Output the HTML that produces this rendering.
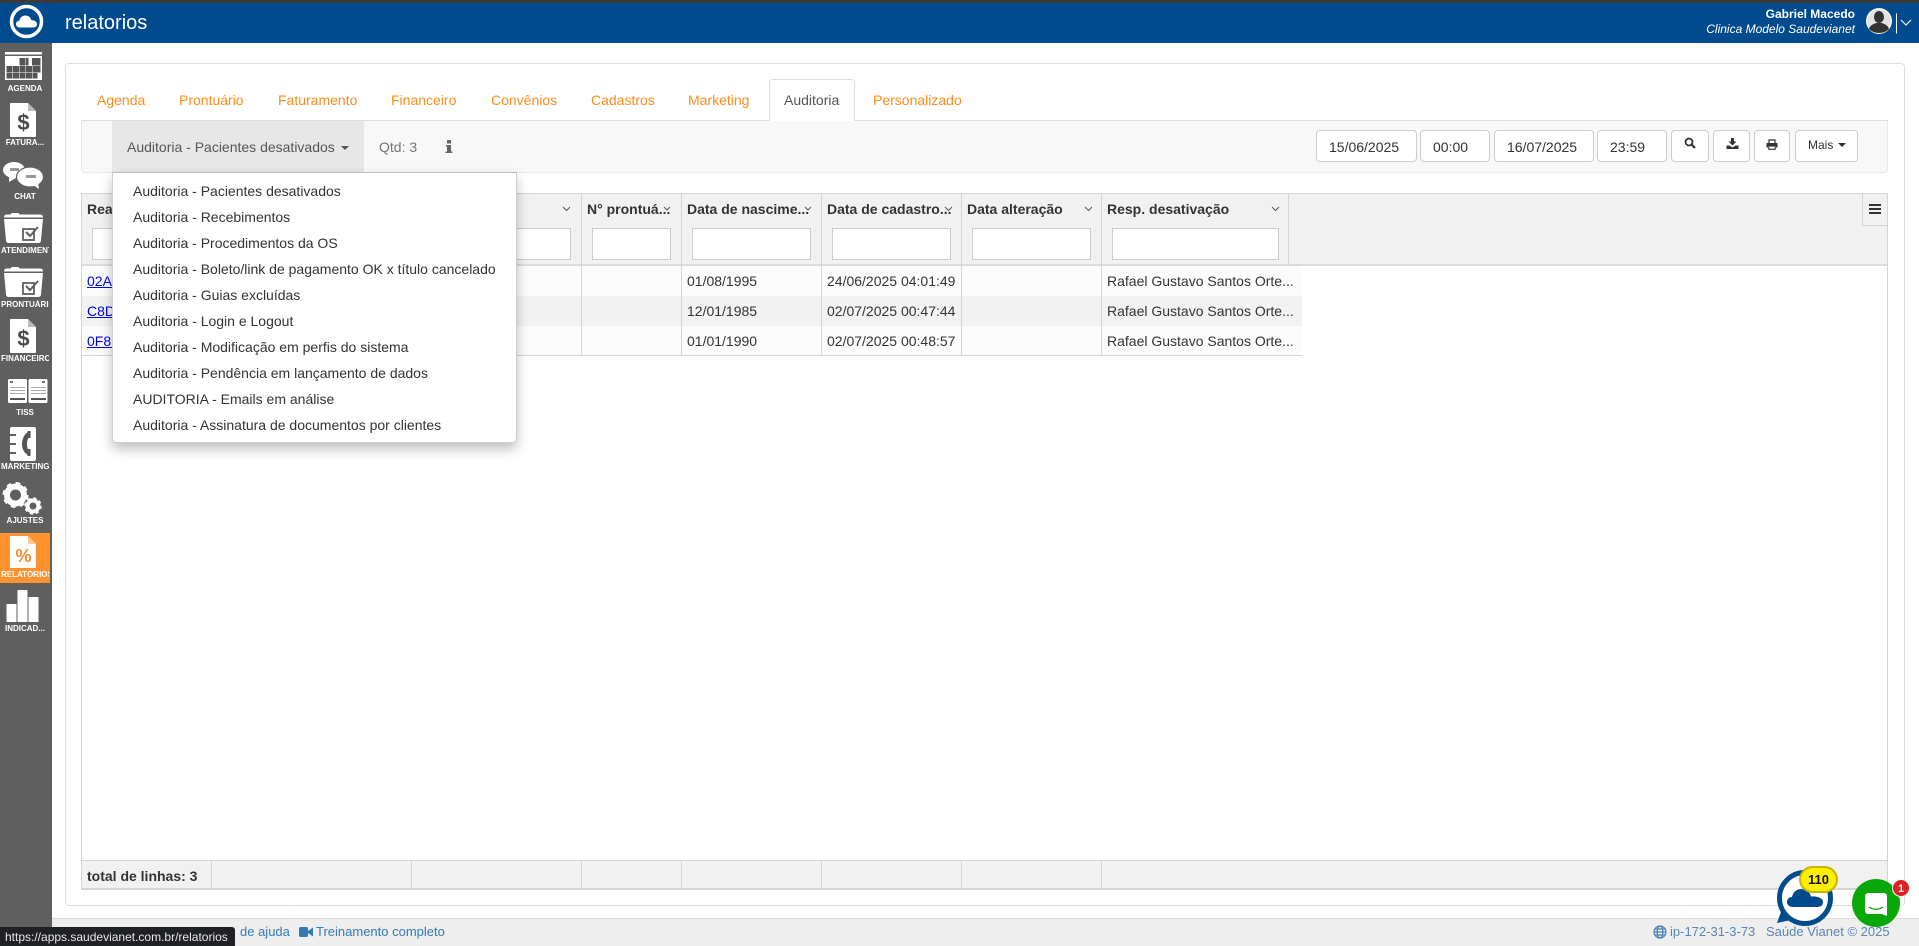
<!DOCTYPE html>
<html lang="pt-BR">
<head>
<meta charset="utf-8">
<title>relatorios</title>
<style>
html,body{margin:0;padding:0;width:1919px;height:946px;overflow:hidden;background:#fff;font-family:"Liberation Sans",sans-serif;font-size:14px;color:#333}
*{box-sizing:border-box}
.a{position:absolute}
.t{position:absolute;white-space:nowrap;line-height:20px}
.lab{position:absolute;left:1px;width:48px;overflow:hidden;text-align:center;font-size:8px;font-weight:bold;color:#fff;line-height:10px;white-space:nowrap}
.tab{position:absolute;top:89px;line-height:22px;color:#ff8c1a;white-space:nowrap}
.inp{position:absolute;top:130px;height:32px;background:#fff;border:1px solid #ccc;border-radius:4px;color:#333;line-height:30px;padding:1px 0 0 12px}
.btn{position:absolute;top:130px;height:32px;background:#fff;border:1px solid #ccc;border-radius:4px}
.mi{position:absolute;left:133px;line-height:20px;white-space:nowrap;color:#333}
.th{position:absolute;top:199px;line-height:20px;font-weight:bold;color:#333;white-space:nowrap}
.fi{position:absolute;top:228px;height:32px;background:#fff;border:1px solid #ccc}
.vl{position:absolute;width:1px;background:#d4d4d4}
.td{position:absolute;line-height:20px;color:#333;white-space:nowrap}
.lnk{position:absolute;left:87px;line-height:20px;color:#00e;text-decoration:underline}
</style>
</head>
<body>
<!-- top -->
<div class="a" style="left:0;top:0;width:1919px;height:3px;background:#3a3a3a"></div>
<div class="a" style="left:0;top:3px;width:1919px;height:40px;background:#004b8d"></div>
<svg class="a" style="left:8px;top:3px" width="38" height="38" viewBox="8 3 38 38">
<circle cx="26.500" cy="21.500" r="15" fill="none" stroke="#fff" stroke-width="3.500"/>
<path d="M20 27.500c-2.500 0-4-1.600-4-3.500 0-2 1.600-3.300 3.400-3.300.6-3.300 3.100-5.200 6-5.200 3 0 5.400 1.900 6 4.800 2.600-.3 5.600 1.100 5.600 3.800 0 2.100-1.700 3.400-4 3.400z" fill="#fff"/>
</svg>
<div class="t" style="left:65px;top:11px;font-size:20px;line-height:24px;color:#fff">relatorios</div>
<div class="t" style="right:64px;top:6px;font-size:12px;line-height:16px;color:#fff;font-weight:bold">Gabriel Macedo</div>
<div class="t" style="right:64px;top:21px;font-size:12px;line-height:16px;color:#fff;font-style:italic">Clinica Modelo Saudevianet</div>
<svg class="a" style="left:1864px;top:6px" width="52" height="32" viewBox="0 0 52 32">
<circle cx="15" cy="15" r="13" fill="#f4f4f4"/>
<circle cx="15" cy="15" r="11.500" fill="#e2e2e2"/>
<ellipse cx="15" cy="11" rx="5" ry="6" fill="#333"/>
<path d="M5 23c1-4 5-5 7-6h6c2 1 6 2 7 6-2.500 2.500-6 4-10 4S7.500 25.500 5 23z" fill="#333"/>
<path d="M32.500 7.500v20" stroke="#fff" stroke-width="1"/>
<path d="M37 14l5 5 5-5" fill="none" stroke="#fff" stroke-width="1.100"/>
</svg>

<!-- sidebar -->
<div class="a" style="left:0;top:43px;width:52px;height:903px;background:#5f5f5f"></div>
<div class="a" style="left:0;top:533px;width:50px;height:50px;background:#ff922e"></div>
<svg class="a" style="left:0;top:43px" width="52" height="600" viewBox="0 43 52 600">
<!-- agenda -->
<rect x="5" y="52" width="37" height="2.500" fill="#fff"/>
<rect x="5" y="56" width="37" height="24" fill="#fff"/>
<g fill="#555">
<rect x="6.500" y="66" width="6" height="6.500"/><rect x="13" y="66" width="6" height="6.500"/>
<rect x="19.500" y="58" width="6" height="7.500"/><rect x="19.500" y="66" width="6" height="6.500"/>
<rect x="32" y="58" width="8.500" height="7.500"/><rect x="26" y="58" width="2.500" height="7.500"/>
<rect x="26" y="66" width="6" height="6.500"/><rect x="32.500" y="66" width="8" height="6.500"/>
<rect x="6.500" y="73" width="6" height="5.500"/><rect x="13" y="73" width="6" height="5.500"/>
<rect x="19.500" y="73" width="6" height="5.500"/><rect x="26" y="73" width="6" height="5.500"/><rect x="32.500" y="73" width="5" height="5.500"/>
</g>
<!-- fatura -->
<g id="d1"><path d="M11 103h17l8 8v25a1 1 0 0 1-1 1H11a1 1 0 0 1-1-1v-32a1 1 0 0 1 1-1z" fill="#fff"/><path d="M28 103l8 8h-8z" fill="#bbb"/></g>
<text x="23.500" y="130" font-family="Liberation Sans" font-size="22" font-weight="bold" fill="#4a4a4a" text-anchor="middle">$</text>
<!-- chat -->
<ellipse cx="14" cy="170" rx="11" ry="8" fill="#fff"/>
<path d="M9 175l0 7 7-4z" fill="#fff"/>
<rect x="10" y="168" width="9" height="3" fill="#999"/>
<ellipse cx="30" cy="177" rx="13.500" ry="10" fill="#fff" stroke="#5f5f5f" stroke-width="1.200"/>
<path d="M33 185l6 4-1-7z" fill="#fff"/>
<rect x="26" y="175" width="10" height="3" fill="#999"/>
<!-- folders -->
<g id="f1">
<path d="M4 217.500c0-2 1-3 3-3h3l2-1.500h6l2 1.500h20c2 0 3 1 3 3z" fill="#fff"/>
<path d="M4 219h39l-2 21c0 2-1 3-3 3H9c-2 0-3-1-3-3z" fill="#fff"/>
<rect x="23" y="229" width="11" height="11" fill="none" stroke="#5f5f5f" stroke-width="1.800"/>
<path d="M26 232l4 4 8-9" fill="none" stroke="#5f5f5f" stroke-width="2"/>
</g>
<use href="#f1" y="54"/>
<use href="#d1" y="216"/>
<text x="23.500" y="346" font-family="Liberation Sans" font-size="22" font-weight="bold" fill="#4a4a4a" text-anchor="middle">$</text>
<!-- tiss -->
<rect x="8" y="379" width="19" height="24" rx="1.500" fill="#fff"/>
<rect x="28.500" y="379" width="19" height="24" rx="1.500" fill="#fff"/>
<g fill="#aaa"><rect x="10" y="387" width="15" height="1"/><rect x="10" y="390" width="15" height="1"/><rect x="10" y="393" width="15" height="1"/><rect x="31" y="387" width="15" height="1"/><rect x="31" y="390" width="15" height="1"/><rect x="31" y="393" width="15" height="1"/></g>
<rect x="10" y="398" width="15" height="2" fill="#555"/><rect x="31" y="398" width="15" height="2" fill="#555"/>
<rect x="10" y="381" width="3" height="2" fill="#777"/><rect x="42" y="381" width="3" height="2" fill="#777"/>
<!-- marketing -->
<path d="M12 427h22a2 2 0 0 1 2 2v30a2 2 0 0 1-2 2H12a2 2 0 0 1-2-2v-30a2 2 0 0 1 2-2z" fill="#fff"/>
<rect x="10" y="434" width="6" height="2" fill="#5f5f5f"/><rect x="10" y="443" width="6" height="2" fill="#5f5f5f"/><rect x="10" y="452" width="6" height="2" fill="#5f5f5f"/>
<path d="M30 431c-5 2-8 7-8 13s3 10 8 12l0-5c-2-1-3-3-3-7s1-6 3-8z" fill="#555"/>
<rect x="27.500" y="431" width="3" height="7" fill="#555"/><rect x="27.500" y="449" width="3" height="7" fill="#555"/>
<!-- gears -->
<circle cx="15.500" cy="495" r="8.500" fill="none" stroke="#fff" stroke-width="6"/>
<circle cx="15.500" cy="495" r="11.500" fill="none" stroke="#fff" stroke-width="3" stroke-dasharray="4.500 4.500"/>
<circle cx="33" cy="506" r="5.500" fill="none" stroke="#fff" stroke-width="4"/>
<circle cx="33" cy="506" r="7.500" fill="none" stroke="#fff" stroke-width="2.500" stroke-dasharray="3 2.900"/>
<!-- relatorios -->
<path d="M11 536h17l8 8v23a1 1 0 0 1-1 1H11a1 1 0 0 1-1-1v-30a1 1 0 0 1 1-1z" fill="#fff"/>
<path d="M28 536l8 8h-8z" fill="#ffc58f"/>
<text x="23.500" y="562" font-family="Liberation Sans" font-size="18" font-weight="bold" fill="#f0892a" text-anchor="middle">%</text>
<!-- indicadores -->
<rect x="6.500" y="604" width="10" height="18" fill="#fff"/>
<rect x="17.500" y="590" width="10" height="32" fill="#fff"/>
<rect x="28.500" y="597" width="10" height="25" fill="#fff"/>
</svg>
<div class="lab" style="top:84px">AGENDA</div>
<div class="lab" style="top:138px">FATURA...</div>
<div class="lab" style="top:192px">CHAT</div>
<div class="lab" style="top:246px">ATENDIMENTOS</div>
<div class="lab" style="top:300px">PRONTUÁRIOS</div>
<div class="lab" style="top:354px">FINANCEIRO</div>
<div class="lab" style="top:408px">TISS</div>
<div class="lab" style="top:462px">MARKETING</div>
<div class="lab" style="top:516px">AJUSTES</div>
<div class="lab" style="top:570px;text-align:left">RELATÓRIOS</div>
<div class="lab" style="top:624px">INDICAD...</div>

<!-- panel -->
<div class="a" style="left:65px;top:63px;width:1840px;height:843px;background:#fff;border:1px solid #ddd;border-radius:4px"></div>

<!-- tabs -->
<div class="a" style="left:81px;top:120px;width:1807px;height:1px;background:#ddd"></div>
<div class="a" style="left:769px;top:79px;width:86px;height:42px;background:#fff;border:1px solid #ddd;border-bottom:0;border-radius:4px 4px 0 0"></div>
<div class="tab" style="left:97px">Agenda</div>
<div class="tab" style="left:179px">Prontuário</div>
<div class="tab" style="left:278px">Faturamento</div>
<div class="tab" style="left:391px">Financeiro</div>
<div class="tab" style="left:491px">Convênios</div>
<div class="tab" style="left:591px">Cadastros</div>
<div class="tab" style="left:688px">Marketing</div>
<div class="tab" style="left:784px;color:#555">Auditoria</div>
<div class="tab" style="left:873px">Personalizado</div>

<!-- toolbar -->
<div class="a" style="left:81px;top:121px;width:1807px;height:52px;background:#f8f8f8;border:1px solid #e7e7e7;border-top:0;border-radius:0 0 4px 4px"></div>
<div class="a" style="left:112px;top:121px;width:252px;height:52px;background:#e7e7e7"></div>
<div class="t" style="left:127px;top:137px;color:#555">Auditoria - Pacientes desativados</div>
<div class="a" style="left:341px;top:146px;width:0;height:0;border:4px solid transparent;border-top-color:#555;border-bottom:0"></div>
<div class="t" style="left:379px;top:137px;color:#777">Qtd: 3</div>
<svg class="a" style="left:444px;top:139px" width="10" height="16" viewBox="0 0 10 16"><rect x="3" y="1" width="4" height="3.500" fill="#666"/><path d="M2 6h5v6.500h1.500V14H1.500v-1.500H3V7.500H2z" fill="#666"/></svg>

<div class="inp" style="left:1316px;width:101px">15/06/2025</div>
<div class="inp" style="left:1420px;width:70px">00:00</div>
<div class="inp" style="left:1494px;width:100px">16/07/2025</div>
<div class="inp" style="left:1597px;width:70px">23:59</div>
<div class="btn" style="left:1671px;width:38px"></div>
<svg class="a" style="left:1684px;top:137px" width="12" height="12" viewBox="0 0 12 12"><circle cx="5" cy="5" r="3.500" fill="none" stroke="#333" stroke-width="1.800"/><path d="M7.500 7.500l3.500 3.500" stroke="#333" stroke-width="2.200"/></svg>
<div class="btn" style="left:1713px;width:37px"></div>
<svg class="a" style="left:1726px;top:138px" width="13" height="12" viewBox="0 0 13 12"><path d="M5 0h3v3.500h2.500L6.500 7.500 2.500 3.500H5z" fill="#333"/><path d="M.5 7.500h3l3 2 3-2h3V11H.5z" fill="#333"/></svg>
<div class="btn" style="left:1754px;width:36px"></div>
<svg class="a" style="left:1766px;top:139px" width="12" height="11" viewBox="0 0 12 11"><path d="M3 4V1h6v3" fill="none" stroke="#333" stroke-width="1.200"/><path d="M.5 4h11v4.500H10V7H2v1.500H.5z" fill="#333"/><rect x="2.800" y="7" width="6.400" height="3.300" fill="none" stroke="#333" stroke-width="1.100"/></svg>
<div class="btn" style="left:1795px;width:63px"></div>
<div class="t" style="left:1808px;top:135px;font-size:12px;color:#333">Mais</div>
<div class="a" style="left:1838px;top:143px;width:0;height:0;border:4px solid transparent;border-top-color:#333;border-bottom:0"></div>

<!-- grid -->
<div class="a" style="left:81px;top:193px;width:1807px;height:697px;background:#fff;border:1px solid #d4d4d4;border-bottom:2px solid #d4d4d4"></div>
<div class="a" style="left:82px;top:194px;width:1805px;height:71px;background:#f1f1f1"></div>
<div class="a" style="left:82px;top:264px;width:1805px;height:2px;background:#dcdcdc"></div>
<div class="a" style="left:1862px;top:193px;width:26px;height:33px;background:#f1f1f1;border:1px solid #d4d4d4"></div>
<div class="a" style="left:1869px;top:204px;width:12px;height:2px;background:#333"></div>
<div class="a" style="left:1869px;top:208px;width:12px;height:2px;background:#333"></div>
<div class="a" style="left:1869px;top:212px;width:12px;height:2px;background:#333"></div>

<!-- rows -->
<div class="a" style="left:82px;top:266px;width:1220px;height:30px;background:#fcfcfc"></div>
<div class="a" style="left:82px;top:296px;width:1220px;height:30px;background:#f2f2f2"></div>
<div class="a" style="left:82px;top:326px;width:1220px;height:30px;background:#fcfcfc"></div>
<div class="a" style="left:82px;top:355px;width:1220px;height:1px;background:#d4d4d4"></div>
<div class="vl" style="left:581px;top:194px;height:162px"></div>
<div class="vl" style="left:681px;top:194px;height:162px"></div>
<div class="vl" style="left:821px;top:194px;height:162px"></div>
<div class="vl" style="left:961px;top:194px;height:162px"></div>
<div class="vl" style="left:1101px;top:194px;height:162px"></div>
<div class="vl" style="left:1288px;top:194px;height:71px"></div>

<div class="th" style="left:87px">Rea</div>
<div class="th" style="left:587px">N° prontuá...</div>
<div class="th" style="left:687px">Data de nascime...</div>
<div class="th" style="left:827px">Data de cadastro...</div>
<div class="th" style="left:967px">Data alteração</div>
<div class="th" style="left:1107px">Resp. desativação</div>
<svg class="a" style="left:82px;top:204px" width="1210" height="10" viewBox="82 204 1210 10" fill="none" stroke="#556" stroke-width="1">
<path d="M563 207l3.500 3.500 3.500-3.500"/><path d="M664 207l3 3 3-3"/><path d="M805 207l3 3 3-3"/><path d="M945 207l3.500 3.500 3.500-3.500"/><path d="M1085 207l3.500 3.500 3.500-3.500"/><path d="M1272 207l3.500 3.500 3.500-3.500"/>
</svg>

<div class="fi" style="left:92px;width:100px"></div>
<div class="fi" style="left:480px;width:91px"></div>
<div class="fi" style="left:592px;width:79px"></div>
<div class="fi" style="left:692px;width:119px"></div>
<div class="fi" style="left:832px;width:119px"></div>
<div class="fi" style="left:972px;width:119px"></div>
<div class="fi" style="left:1112px;width:167px"></div>

<div class="lnk" style="top:271px">02A4</div>
<div class="lnk" style="top:301px">C8D5</div>
<div class="lnk" style="top:331px">0F8B</div>
<div class="td" style="left:687px;top:271px">01/08/1995</div>
<div class="td" style="left:827px;top:271px">24/06/2025 04:01:49</div>
<div class="td" style="left:1107px;top:271px">Rafael Gustavo Santos Orte...</div>
<div class="td" style="left:687px;top:301px">12/01/1985</div>
<div class="td" style="left:827px;top:301px">02/07/2025 00:47:44</div>
<div class="td" style="left:1107px;top:301px">Rafael Gustavo Santos Orte...</div>
<div class="td" style="left:687px;top:331px">01/01/1990</div>
<div class="td" style="left:827px;top:331px">02/07/2025 00:48:57</div>
<div class="td" style="left:1107px;top:331px">Rafael Gustavo Santos Orte...</div>

<!-- grid footer -->
<div class="a" style="left:82px;top:860px;width:1805px;height:28px;background:#f1f1f1;border-top:1px solid #d4d4d4"></div>
<div class="vl" style="left:211px;top:860px;height:28px"></div>
<div class="vl" style="left:411px;top:860px;height:28px"></div>
<div class="vl" style="left:581px;top:860px;height:28px"></div>
<div class="vl" style="left:681px;top:860px;height:28px"></div>
<div class="vl" style="left:821px;top:860px;height:28px"></div>
<div class="vl" style="left:961px;top:860px;height:28px"></div>
<div class="vl" style="left:1101px;top:860px;height:28px"></div>
<div class="t" style="left:87px;top:866px;font-weight:bold;font-size:14px;color:#333">total de linhas: 3</div>

<!-- dropdown -->
<div class="a" style="left:112px;top:172px;width:405px;height:271px;background:#fff;border:1px solid #ccc;border-top:1px solid #bbb;border-radius:0 0 4px 4px;box-shadow:0 6px 12px rgba(0,0,0,.25)"></div>
<div class="mi" style="top:181px">Auditoria - Pacientes desativados</div>
<div class="mi" style="top:207px">Auditoria - Recebimentos</div>
<div class="mi" style="top:233px">Auditoria - Procedimentos da OS</div>
<div class="mi" style="top:259px">Auditoria - Boleto/link de pagamento OK x título cancelado</div>
<div class="mi" style="top:285px">Auditoria - Guias excluídas</div>
<div class="mi" style="top:311px">Auditoria - Login e Logout</div>
<div class="mi" style="top:337px">Auditoria - Modificação em perfis do sistema</div>
<div class="mi" style="top:363px">Auditoria - Pendência em lançamento de dados</div>
<div class="mi" style="top:389px">AUDITORIA - Emails em análise</div>
<div class="mi" style="top:415px">Auditoria - Assinatura de documentos por clientes</div>

<!-- footer -->
<div class="a" style="left:52px;top:918px;width:1867px;height:28px;background:#eee;border-top:1px solid #ddd"></div>
<div class="t" style="left:240px;top:922px;font-size:13px;color:#337ab7">de ajuda</div>
<svg class="a" style="left:298px;top:926px" width="16" height="12" viewBox="0 0 16 12"><rect x="1" y="1" width="9" height="10" rx="1.500" fill="#337ab7"/><path d="M10 5l5-3.500v9L10 7z" fill="#337ab7"/></svg>
<div class="t" style="left:316px;top:922px;font-size:13px;color:#337ab7">Treinamento completo</div>
<svg class="a" style="left:1653px;top:925px" width="14" height="14" viewBox="0 0 14 14" fill="none" stroke="#4a7fb0" stroke-width="1.200"><circle cx="7" cy="7" r="6"/><ellipse cx="7" cy="7" rx="2.800" ry="6"/><path d="M1 7h12M2 4h10M2 10h10"/></svg>
<div class="t" style="left:1670px;top:922px;font-size:13px;color:#5a85b0">ip-172-31-3-73</div>
<div class="t" style="left:1766px;top:922px;font-size:13px;color:#5a85b0">Saúde Vianet © 2025</div>
<div class="a" style="left:0;top:927px;width:235px;height:19px;background:#202124;border-radius:0 3px 0 0"></div>
<div class="t" style="left:5px;top:928px;font-size:12px;line-height:18px;color:#e8e8e8">https://apps.saudevianet.com.br/relatorios</div>

<!-- chat widgets -->
<svg class="a" style="left:1770px;top:862px" width="80" height="76" viewBox="1770 862 80 76">
<circle cx="1805" cy="898" r="25.500" fill="#fff" stroke="#004b8d" stroke-width="5"/>
<path d="M1781 912l-4 11 14-3z" fill="#004b8d"/>
<path d="M1793 907c-3.500 0-6-2-6-5s2.300-5 5-5c1-5 5-8 9-8 5 0 9 3 10 7.500 6-.5 12 1.500 12 5.500s-3 5-6 5z" fill="#004b8d"/>
<rect x="1800" y="867" width="37" height="25" rx="12.500" fill="#ffee00" stroke="#c8b400" stroke-width="2"/>
<text x="1818.500" y="884" font-family="Liberation Sans" font-size="13" font-weight="bold" fill="#111" text-anchor="middle">110</text>
</svg>
<svg class="a" style="left:1850px;top:878px" width="62" height="52" viewBox="1850 878 62 52">
<circle cx="1876" cy="903" r="24" fill="#09a809"/>
<path d="M1868 893h16a3 3 0 0 1 3 3v20l-5-2h-14a3 3 0 0 1-3-3v-15a3 3 0 0 1 3-3z" fill="#fff"/>
<path d="M1869 907c4 3 10 3 14 0" fill="none" stroke="#09a809" stroke-width="1.300"/>
<circle cx="1901" cy="888" r="8.500" fill="#e02020" stroke="#fff" stroke-width="1"/>
<text x="1901" y="892" font-family="Liberation Sans" font-size="11" font-weight="bold" fill="#fff" text-anchor="middle">1</text>
</svg>
</body>
</html>
